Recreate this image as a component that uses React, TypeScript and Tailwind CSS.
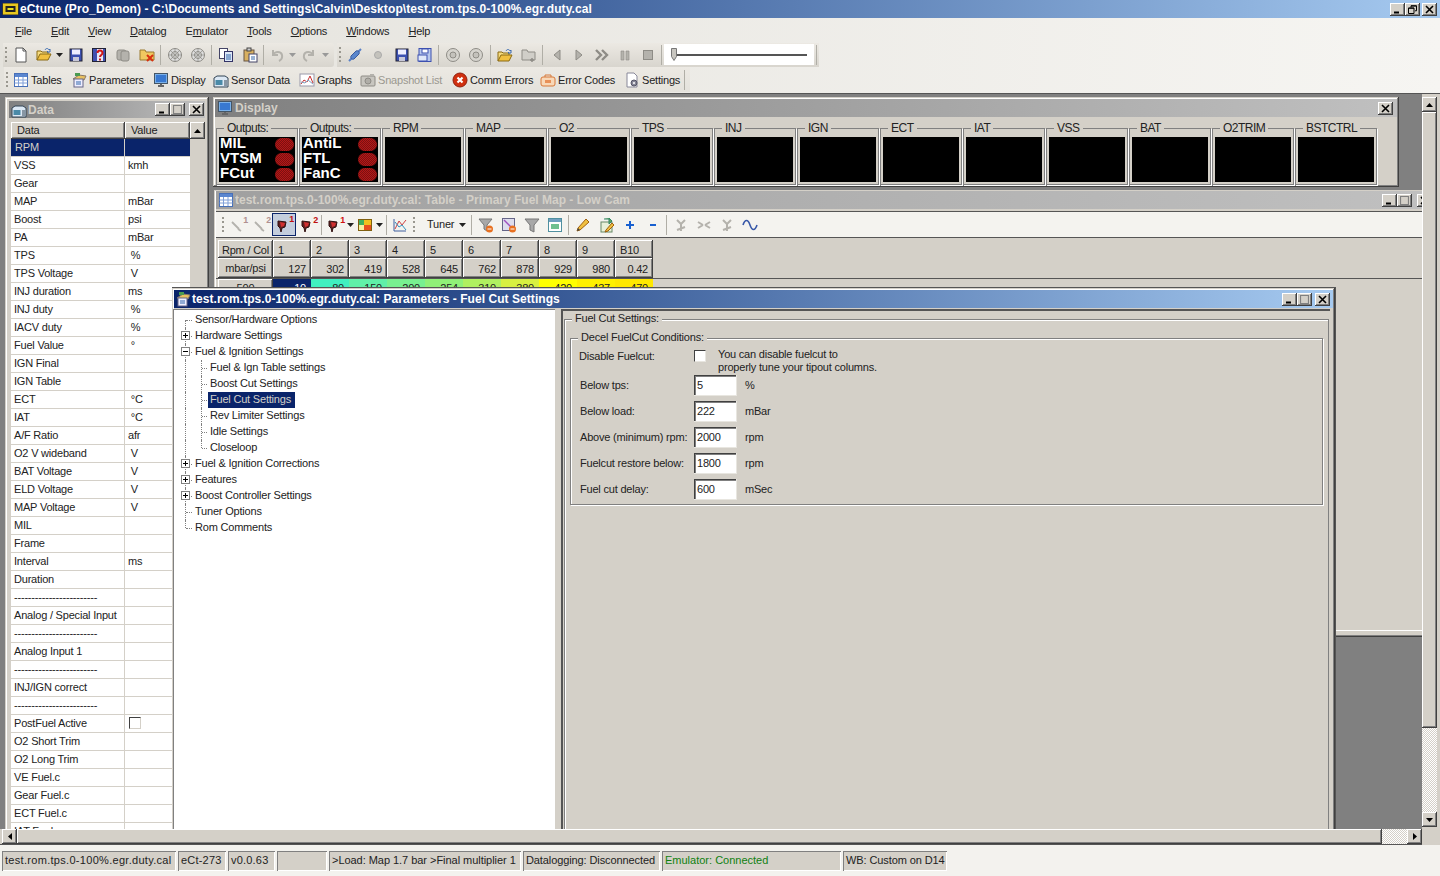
import React from "react";

const OUT = "shadow-[inset_-1px_-1px_0_#404040,inset_1px_1px_0_#ffffff,inset_-2px_-2px_0_#808080]";
const SUNK = "shadow-[inset_1px_1px_0_#808080,inset_-1px_-1px_0_#ffffff]";
const WIN = "shadow-[inset_-1px_-1px_0_#404040,inset_1px_1px_0_#d4d0c8,inset_-2px_-2px_0_#808080,inset_2px_2px_0_#ffffff]";

type P = { n: string };
function Ico({ n }: P) {
  const g = "#b4b2ac";
  const d = "#8e8c86";
  const c: Record<string, React.ReactNode> = {
    doc: <><path d="M3 1h7l3 3v11H3z" fill="#fff" stroke="#555" /><path d="M10 1v3h3" fill="none" stroke="#555" /></>,
    open: <><path d="M1 13V4h4l1 1h6v2" fill="#f6dc80" stroke="#8a6a14" /><path d="M1 13l3-6h11l-3 6z" fill="#f0c040" stroke="#8a6a14" /><path d="M9 3c1-2 3-2 4 0l1-1v3h-3l1-1" fill="none" stroke="#3a6ab0" /></>,
    save: <><rect x="2" y="2" width="12" height="12" fill="#3c50b0" stroke="#223" /><rect x="4" y="2.5" width="8" height="5" fill="#eef" /><rect x="5" y="10" width="6" height="4" fill="#c8c8d8" /></>,
    saveq: <><rect x="1.5" y="1.5" width="13" height="13" fill="#4050b0" stroke="#223" /><rect x="6" y="2" width="6" height="12" fill="#e8e8f4" /><path d="M6.5 6c0-3.5 5-3.5 5 0 0 2-2.5 2-2.5 4M9 11.5v2" fill="none" stroke="#d01818" strokeWidth="2" /></>,
    gdoc: <><rect x="2" y="3" width="9" height="10" rx="2" fill={g} stroke={d} /><rect x="6" y="4" width="8" height="10" rx="2" fill={g} stroke={d} /></>,
    fx: <><path d="M1 13V3h5l1 2h8v8z" fill="#f0c860" stroke="#9a7a30" /><path d="M8 8l6 6M14 8l-6 6" stroke="#d83010" strokeWidth="2" /></>,
    gear: <><circle cx="8" cy="8" r="6.5" fill="#ddd" stroke={d} /><circle cx="8" cy="8" r="3.5" fill="none" stroke={d} /><path d="M8 1v14M1 8h14M3 3l10 10M13 3L3 13" stroke={d} strokeWidth=".7" /></>,
    copy: <><rect x="1.5" y="1.5" width="8" height="10" fill="#fff" stroke="#446" /><rect x="6.5" y="4.5" width="8" height="10" fill="#dde8f8" stroke="#336" /><path d="M8 8h5M8 10h5M8 12h5" stroke="#36a" /></>,
    paste: <><rect x="2" y="3" width="10" height="11" fill="#d8b060" stroke="#654" /><rect x="5" y="1" width="4" height="3" fill="#ccc" stroke="#444" /><rect x="7" y="7" width="8" height="8" fill="#fff" stroke="#446" /><path d="M9 10h4M9 12h4" stroke="#36a" /></>,
    undo: <path d="M4 3v5h5M4 8c2-4 8-4 9 0 .6 3-1 5-3 6" fill="none" stroke={g} strokeWidth="2" />,
    redo: <path d="M12 3v5H7M12 8c-2-4-8-4-9 0-.6 3 1 5 3 6" fill="none" stroke={g} strokeWidth="2" />,
    plug: <><path d="M2 14l3-3M14 2l-3 3" stroke="#5880c8" strokeWidth="2" /><path d="M4 9l5-5c2-1 4 1 3 3l-5 5c-2 1-4-1-3-3z" fill="#5a86cc" stroke="#3a5a9c" /></>,
    dot: <circle cx="8" cy="8" r="3.5" fill="#c4c2bc" stroke="#aaa" />,
    sv2: <><rect x="2" y="1.5" width="12" height="13" fill="#b8c8ec" stroke="#3c50b0" /><rect x="5" y="2" width="6" height="4" fill="#fff" stroke="#3c50b0" /><rect x="1" y="8" width="9" height="6" fill="#e0e8f8" stroke="#3c50b0" /></>,
    disc: <><circle cx="8" cy="8" r="6.5" fill="#d6d4ce" stroke={d} /><circle cx="8" cy="8" r="3" fill="#c4c2bc" stroke={d} /></>,
    fold: <><path d="M1 14V5h4l1 1h6v2" fill="#f6dc80" stroke="#8a6a14" /><path d="M1 14l3-6h11l-3 6z" fill="#f0c040" stroke="#8a6a14" /><path d="M9 4c1-2 3-2 4 0l1-1v3h-3l1-1" fill="none" stroke="#3a6ab0" /></>,
    gfold: <><path d="M1 13V3h5l1 2h7v8z" fill="#d0cec8" stroke={d} /><path d="M11 11v4M9 13h4" stroke={d} strokeWidth="1.5" /></>,
    left: <path d="M11 3v10L5 8z" fill={g} stroke={d} />,
    right: <path d="M5 3v10l6-5z" fill={g} stroke={d} />,
    ff: <path d="M2 3l5 5-5 5M8 3l5 5-5 5" fill="none" stroke={d} strokeWidth="2.4" />,
    pause: <path d="M4 4h3v9H4zM9 4h3v9H9z" fill={g} stroke={d} strokeWidth=".6" />,
    stop: <rect x="3.5" y="3.5" width="9" height="9" fill={g} stroke={d} />,
    tables: <><rect x="1.5" y="1.5" width="13" height="13" fill="#fff" stroke="#4870b8" /><rect x="2" y="2" width="12" height="3" fill="#5a86d0" /><path d="M1.5 8h13M1.5 11h13M5.5 5v9M10 5v9" stroke="#80a0d8" /></>,
    params: <><path d="M2 7l6-4 7 1-2 4z" fill="#e8c060" stroke="#876" /><rect x="3" y="7" width="9" height="8" fill="#eef" stroke="#668" /><path d="M4 1h5v3H4z" fill="#4a9a50" /><path d="M5 10h5M5 12h5" stroke="#36a" /></>,
    display: <><rect x="1.5" y="1.5" width="13" height="10" fill="#7ab0e8" stroke="#456" /><rect x="3" y="3" width="10" height="7" fill="#3878d0" /><path d="M5 14h6M8 12v2" stroke="#666" strokeWidth="2" /></>,
    sensor: <><path d="M1 15V6l3-2h8l3 2v9z" fill="#dce8f4" stroke="#345" /><rect x="2.5" y="8" width="7" height="5" fill="#4a8aa8" /><path d="M11 9h3M11 11h3M11 13h3" stroke="#345" /></>,
    graphs: <><rect x="1" y="2" width="14" height="12" fill="#fff" stroke="#99a" /><path d="M2 12l3-4 3 2 3-6 3 7" fill="none" stroke="#c83030" /><path d="M2 10l4 1 3-3 5 4" fill="none" stroke="#80a0c0" /></>,
    snap: <><rect x="1" y="4" width="14" height="10" rx="1" fill="#c8c6c0" stroke={d} /><circle cx="8" cy="9" r="3" fill="#b0aea8" stroke={d} /><rect x="10" y="2" width="4" height="2" fill={g} /></>,
    comm: <><circle cx="8" cy="8" r="7" fill="#d03010" stroke="#902010" /><path d="M5.5 5.5l5 5M10.5 5.5l-5 5" stroke="#fff" strokeWidth="2.2" /></>,
    err: <><rect x="1" y="5" width="14" height="9" rx="2" fill="#f8d8b8" stroke="#d87838" /><path d="M5 5V3h6v2" fill="none" stroke="#d87838" /><rect x="5" y="8" width="6" height="3" fill="#e89058" /></>,
    set: <><path d="M3 1h7l3 3v11H3z" fill="#fff" stroke="#889" /><circle cx="10" cy="11" r="3" fill="#889" stroke="#556" /><circle cx="10" cy="11" r="1" fill="#fff" /></>,
    w1: <path d="M2 5l7 7M8 12l3 2" stroke={g} strokeWidth="1.8" />,
    inj: <><path d="M2 4l8 1-1 5-3 1-1 4-1-4-2-2z" fill="#602020" stroke="#301010" /><path d="M4 5l5 1-1 3-3 1z" fill="#d03030" /></>,
    fm: <><rect x="1.5" y="2.5" width="13" height="11" fill="#f8f0a0" stroke="#806010" /><rect x="2" y="3" width="5" height="5" fill="#40b060" /><rect x="7" y="8" width="7" height="5" fill="#e85020" /><rect x="7" y="3" width="7" height="5" fill="#f0c020" /></>,
    chart: <><path d="M2 2v12h12" fill="none" stroke="#4060a0" /><path d="M3 12l4-8 3 4 4-5" fill="none" stroke="#d04040" /><path d="M3 5l4 5 3-2 4 5" fill="none" stroke="#3090c0" /></>,
    f1: <><path d="M1 2h13l-5 6v6l-3-2V8z" fill="#a8a8a8" stroke="#777" /><circle cx="11.5" cy="12" r="3.5" fill="#e87020" /><path d="M9.5 12h4" stroke="#fff" /></>,
    f2: <><rect x="1.5" y="1.5" width="12" height="12" fill="#dde" stroke="#668" /><path d="M3 3l8 8" stroke="#a050c0" strokeWidth="1.5" /><circle cx="11.5" cy="12" r="3.5" fill="#e87020" /><path d="M9.5 12h4" stroke="#fff" /></>,
    f3: <path d="M1 2h14l-5 6v7l-4-2V8z" fill="#a8a8a8" stroke="#777" />,
    f4: <><rect x="1.5" y="1.5" width="13" height="13" fill="#fff" stroke="#5090a0" /><rect x="2" y="2" width="12" height="3" fill="#70a0c0" /><rect x="4" y="7" width="8" height="5" fill="#70c090" /></>,
    pen: <><path d="M3 11L11 2l3 3-9 8-3 1z" fill="#f0c040" stroke="#a06010" /><path d="M2 14l1-3 2 2z" fill="#444" /></>,
    pen2: <><rect x="2" y="5" width="11" height="10" fill="#e8f0d8" stroke="#686" /><path d="M5 2h5v5l3-3-3-3" fill="#60a060" stroke="#386" /><path d="M7 13l6-7 2 2-6 6-3 1z" fill="#f0c040" stroke="#a06010" /></>,
    plus: <path d="M8 4v8M4 8h8" stroke="#1860d0" strokeWidth="2" />,
    minus: <path d="M5 8h6" stroke="#1860d0" strokeWidth="2" />,
    spark: <path d="M4 3l4 4M12 3L8 7M8 7v7M4 13l8-3" stroke={g} strokeWidth="2" fill="none" />,
    spark2: <path d="M2 5l5 3M14 5L9 8M2 11l5-3M14 11L9 8" stroke={g} strokeWidth="2" fill="none" />,
    wave: <path d="M1 8c2-6 5-6 7 0s5 6 7 0" fill="none" stroke="#3858a8" strokeWidth="1.6" />,
  };
  return <svg viewBox="0 0 16 16" className="w-4 h-4 shrink-0">{c[n]}</svg>;
}

function Cap({ k }: { k: string }) {
  return (
    <div className={`w-[15px] h-[13px] bg-[#d4d0c8] ${OUT} flex items-center justify-center shrink-0`}>
      <svg viewBox="0 0 9 9" className="w-[9px] h-[9px]">
        {k === "min" && <path d="M1 7.5h5" stroke="#000" strokeWidth="2" />}
        {k === "maxg" && <path d="M.5 .5h8v8h-8z" fill="none" stroke="#808080" strokeWidth="1.2" />}
        {k === "res" && <path d="M3 2.5V.8h5.5v5H7M.5 3h5.5v5.5H.5zM.5 3.2h5.5M3 1h5.5" fill="none" stroke="#000" strokeWidth="1" />}
        {k === "x" && <path d="M1 1l7 7M8 1L1 8" stroke="#000" strokeWidth="1.6" />}
      </svg>
    </div>
  );
}

function Sep() {
  return <div className="w-[5px] h-[20px] flex justify-center shrink-0"><div className="w-px bg-[#b0aea6]" /></div>;
}
function Grip() {
  return <div className="w-[6px] h-[18px] shrink-0 flex flex-col justify-between items-center py-[1px]">{[0, 1, 2, 3].map((i) => <div key={i} className="w-[2px] h-[2px] bg-[#9a9890]" />)}</div>;
}
function B({ n, w, s, c }: { n: string; w: string; s?: string; c?: string }) {
  return (
    <div className={`${w} h-[22px] relative flex items-center justify-center shrink-0`}>
      <Ico n={n} />
      {s && <span className={`absolute right-[1px] top-[2px] text-[9px] leading-[9px] font-bold ${c}`}>{s}</span>}
    </div>
  );
}
function Arr({ w, c = "#222" }: { w: string; c?: string }) {
  return <div className={`${w} flex items-center justify-center shrink-0`}><svg viewBox="0 0 7 4" className="w-[7px] h-1"><path d="M0 0h7L3.5 4z" fill={c} /></svg></div>;
}

const menus: [string, string, string][] = [
  ["", "F", "ile"], ["", "E", "dit"], ["", "V", "iew"], ["", "D", "atalog"], ["E", "m", "ulator"],
  ["", "T", "ools"], ["", "O", "ptions"], ["", "W", "indows"], ["", "H", "elp"],
];

const tb2: [string, string, string, string][] = [
  ["tables", "Tables", "w-[58px]", "text-[#222]"],
  ["params", "Parameters", "w-[82px]", "text-[#222]"],
  ["display", "Display", "w-[60px]", "text-[#222]"],
  ["sensor", "Sensor Data", "w-[86px]", "text-[#222]"],
  ["graphs", "Graphs", "w-[61px]", "text-[#222]"],
  ["snap", "Snapshot List", "w-[92px]", "text-[#9a9890]"],
  ["comm", "Comm Errors", "w-[88px]", "text-[#222]"],
  ["err", "Error Codes", "w-[84px]", "text-[#222]"],
  ["set", "Settings", "w-[60px]", "text-[#222]"],
];

const dataRows: [string, string][] = [
  ["VSS", "kmh"], ["Gear", ""], ["MAP", "mBar"], ["Boost", "psi"], ["PA", "mBar"], ["TPS", " %"], ["TPS Voltage", " V"],
  ["INJ duration", "ms"], ["INJ duty", " %"], ["IACV duty", " %"], ["Fuel Value", " °"], ["IGN Final", ""], ["IGN Table", ""],
  ["ECT", " °C"], ["IAT", " °C"], ["A/F Ratio", "afr"], ["O2 V wideband", " V"], ["BAT Voltage", " V"], ["ELD Voltage", " V"],
  ["MAP Voltage", " V"], ["MIL", ""], ["Frame", ""], ["Interval", "ms"], ["Duration", ""], ["------------------------", ""],
  ["Analog / Special Input", ""], ["------------------------", ""], ["Analog Input 1", ""], ["------------------------", ""],
  ["INJ/IGN correct", ""], ["------------------------", ""], ["PostFuel Active", "#"], ["O2 Short Trim", ""], ["O2 Long Trim", ""],
  ["VE Fuel.c", ""], ["Gear Fuel.c", ""], ["ECT Fuel.c", ""], ["IAT Fuel.c", ""],
];

function DataWin() {
  return (
    <section className={`absolute left-[5px] top-[3px] w-[204px] h-[760px] bg-[#d4d0c8] ${WIN} p-[4px]`}>
      <div className="h-[17px] bg-gradient-to-r from-[#808080] to-[#c0c0c0] flex items-center pl-[2px] pr-[1px]">
        <Ico n="sensor" />
        <span className="flex-1 ml-[1px] font-bold text-[12px] tracking-normal text-[#d4d0c8]">Data</span>
        <Cap k="min" /><Cap k="maxg" /><div className="w-[4px]" /><Cap k="x" />
      </div>
      <div className="mt-[4px] ml-[2px] flex">
        <div className="w-[179px]">
          <div className="flex h-[17px] bg-[#d4d0c8]">
            <div className={`w-[114px] ${OUT} pl-[6px] leading-[17px]`}>Data</div>
            <div className={`flex-1 ${OUT} pl-[6px] leading-[17px]`}>Value</div>
          </div>
          <div className="bg-white">
            <div className="flex h-[18px] bg-[#0a246a] text-[#d4d0c8] leading-[17px] border-b border-[#d4d0c8]">
              <div className="w-[114px] pl-[4px] border-r border-[#d4d0c8]">RPM</div><div className="flex-1" />
            </div>
            {dataRows.map(([a, u], i) => (
              <div key={i} className="flex h-[18px] leading-[17px] border-b border-[#d4d0c8]">
                <div className="w-[114px] pl-[3px] border-r border-[#d4d0c8] whitespace-pre overflow-hidden">{a}</div>
                <div className="flex-1 pl-[3px] whitespace-pre">
                  {u === "#" ? <div className="w-[12px] h-[12px] mt-[2px] ml-[1px] bg-white border border-[#404040] border-r-[#d4d0c8] border-b-[#d4d0c8]" /> : u}
                </div>
              </div>
            ))}
          </div>
        </div>
        <div className="w-[15px] bg-[#d4d0c8]">
          <div className={`h-[17px] ${OUT} flex items-center justify-center`}><svg viewBox="0 0 7 4" className="w-[7px] h-1"><path d="M0 4h7L3.5 0z" /></svg></div>
        </div>
      </div>
    </section>
  );
}

const gauges = ["RPM", "MAP", "O2", "TPS", "INJ", "IGN", "ECT", "IAT", "VSS", "BAT", "O2TRIM", "BSTCTRL"];

function Led() {
  return <div className="w-[19px] h-[13px] rounded-full bg-[repeating-conic-gradient(#b41818_0_25%,#7c1010_0_50%)] bg-[length:2px_2px]" />;
}
function Group({ label, children }: { label: string; children?: React.ReactNode }) {
  return (
    <fieldset className="w-[82px] h-[64px] border border-[#808080] shadow-[1px_1px_0_#ffffff] pt-0 px-[2px] pb-[2px] min-w-0">
      <legend className="ml-[5px] px-[3px] h-[14px] leading-[15px] bg-[#d4d0c8] text-[12px] tracking-[-0.5px]">{label}</legend>
      <div className="h-[45px] bg-black mt-[2px] pl-[1px] flex flex-col justify-center">{children}</div>
    </fieldset>
  );
}
function OutLine({ t }: { t: string }) {
  return (
    <div className="flex items-center justify-between h-[15px] pr-[1px] text-white text-[15px] tracking-normal font-bold leading-[15px]">
      <span className="relative -top-[2px]">{t}</span><Led />
    </div>
  );
}
function DisplayWin() {
  return (
    <section className={`absolute left-[213px] top-[3px] w-[1186px] h-[90px] bg-[#d4d0c8] ${WIN} p-[2px]`}>
      <div className="h-[18px] bg-gradient-to-r from-[#808080] to-[#c0c0c0] flex items-center pl-[2px] pr-[4px]">
        <Ico n="display" />
        <span className="flex-1 ml-[2px] font-bold text-[12px] tracking-normal text-[#d4d0c8]">Display</span>
        <Cap k="x" />
      </div>
      <div className="flex gap-px pl-px mt-[4px]">
        <Group label="Outputs:"><OutLine t="MIL" /><OutLine t="VTSM" /><OutLine t="FCut" /></Group>
        <Group label="Outputs:"><OutLine t="AntiL" /><OutLine t="FTL" /><OutLine t="FanC" /></Group>
        {gauges.map((g) => <Group key={g} label={g} />)}
      </div>
    </section>
  );
}

const cols = ["1", "2", "3", "4", "5", "6", "7", "8", "9", "B10"];
const colv = ["127", "302", "419", "528", "645", "762", "878", "929", "980", "0.42"];
const r1: [string, string][] = [
  ["10", "bg-[#0a246a] text-white"], ["80", "bg-[#40f0c0]"], ["150", "bg-[#60f0a8]"], ["200", "bg-[#78f090]"], ["254", "bg-[#90f078]"],
  ["310", "bg-[#b0f060]"], ["380", "bg-[#d8f040]"], ["420", "bg-[#ffff00]"], ["437", "bg-[#fff000]"], ["470", "bg-[#ffe800]"],
];

function TableWin() {
  return (
    <section className={`absolute left-[214px] top-[96px] w-[1222px] h-[447px] bg-[#d4d0c8] ${WIN} px-[2px] pt-px`}>
      <div className="h-[18px] bg-gradient-to-r from-[#a0a0a0] to-[#c0c0c0] flex items-center pl-[2px] pr-[2px]">
        <Ico n="tables" />
        <span className="flex-1 ml-[1px] font-bold text-[12px] tracking-normal text-[#d4d0c8]">test.rom.tps.0-100%.egr.duty.cal: Table - Primary Fuel Map - Low Cam</span>
        <Cap k="min" /><Cap k="maxg" /><div className="w-[5px]" /><Cap k="x" />
      </div>
      <div className="mt-[2px] h-[27px] bg-[#f4f3ef] border-t border-b border-[#555] flex items-center pl-[4px]">
        <Grip />
        <B n="w1" w="w-[23px]" s="1" c="text-[#b09090]" />
        <B n="w1" w="w-[23px]" s="2" c="text-[#b09090]" />
        <div className="w-[24px] h-[23px] relative bg-[#c4cedd] border border-[#0a246a] flex items-center justify-center">
          <Ico n="inj" /><span className="absolute right-[1px] top-[1px] text-[9px] leading-[9px] font-bold text-[#c01010]">1</span>
        </div>
        <B n="inj" w="w-[23px]" s="2" c="text-[#c01010]" />
        <Sep />
        <B n="inj" w="w-[22px]" s="1" c="text-[#d01010]" /><Arr w="w-[9px]" />
        <B n="fm" w="w-[19px]" /><Arr w="w-[10px]" />
        <Sep />
        <B n="chart" w="w-[22px]" />
        <Grip />
        <span className="ml-[10px] w-[29px]">Tuner</span><Arr w="w-[13px]" />
        <Sep />
        <B n="f1" w="w-[23px]" /><B n="f2" w="w-[23px]" /><B n="f3" w="w-[23px]" /><B n="f4" w="w-[23px]" />
        <Sep />
        <B n="pen" w="w-[24px]" /><B n="pen2" w="w-[23px]" /><B n="plus" w="w-[23px]" /><B n="minus" w="w-[23px]" />
        <Sep />
        <B n="spark" w="w-[23px]" /><B n="spark2" w="w-[23px]" /><B n="spark" w="w-[23px]" /><B n="wave" w="w-[23px]" />
      </div>
      <div className="pl-[2px] pt-[2px] text-[#222]">
        <div className="flex h-[18px]">
          <div className={`w-[55px] ${OUT} text-center leading-[20px]`}>Rpm / Col</div>
          {cols.map((c) => <div key={c} className={`w-[38px] ${OUT} pl-[5px] leading-[20px]`}>{c}</div>)}
        </div>
        <div className="flex h-[20px]">
          <div className={`w-[55px] ${OUT} text-center leading-[21px]`}>mbar/psi</div>
          {colv.map((c) => <div key={c} className={`w-[38px] ${OUT} pr-[5px] text-right leading-[23px]`}>{c}</div>)}
        </div>
      </div>
      <div className="h-px bg-[#555]" />
      <div className="pl-[2px] flex h-[20px]">
        <div className={`w-[55px] ${OUT} text-center leading-[18px]`}>500</div>
        {r1.map(([v, c]) => <div key={v} className={`w-[38px] ${c} text-right pr-[5px] leading-[18px]`}>{v}</div>)}
      </div>
      <div className="absolute left-[2px] right-[2px] bottom-[2px] h-[5px] border-t border-white" />
    </section>
  );
}

const tree: [number, string, string][] = [
  [1, "Sensor/Hardware Options", ""], [1, "Hardware Settings", "+"], [1, "Fuel & Ignition Settings", "-"],
  [2, "Fuel & Ign Table settings", ""], [2, "Boost Cut Settings", ""], [2, "Fuel Cut Settings", "s"], [2, "Rev Limiter Settings", ""],
  [2, "Idle Settings", ""], [2, "Closeloop", "l"], [1, "Fuel & Ignition Corrections", "+"], [1, "Features", "+"],
  [1, "Boost Controller Settings", "+"], [1, "Tuner Options", ""], [1, "Rom Comments", "e"],
];
const DOT = "border-dotted border-[#808080]";

function TreeRow({ lvl, t, f, i }: { lvl: number; t: string; f: string; i: number }) {
  return (
    <div className={`relative h-[16px] leading-[15px] whitespace-nowrap ${lvl === 1 ? "pl-[21px]" : "pl-[36px]"}`}>
      <span className={`absolute left-[11px] border-l ${DOT} ${i === 0 ? "top-[8px] bottom-0" : f === "e" ? "top-0 h-[8px]" : "top-0 bottom-0"}`} />
      {lvl === 2 && <span className={`absolute left-[27px] border-l ${DOT} top-0 ${f === "l" ? "h-[8px]" : "bottom-0"}`} />}
      <span className={`absolute top-[8px] border-t ${DOT} ${lvl === 1 ? "left-[12px] w-[6px]" : "left-[28px] w-[5px]"}`} />
      {(f === "+" || f === "-") && (
        <span className="absolute left-[7px] top-[3px] w-[9px] h-[9px] bg-white border border-[#808080] flex items-center justify-center">
          <svg viewBox="0 0 7 7" className="w-[7px] h-[7px]"><path d={f === "+" ? "M1 3.5h5M3.5 1v5" : "M1 3.5h5"} stroke="#000" /></svg>
        </span>
      )}
      <span className={f === "s" ? "inline-block -ml-[2px] px-[2px] w-[87px] h-[16px] bg-[#0a246a] text-[#d4d0c8]" : ""}>{t}</span>
    </div>
  );
}

function FormRow({ label, v, u }: { label: string; v: string; u: string }) {
  return (
    <div className="flex items-center h-[26px]">
      <span className="w-[123px] pl-[9px] whitespace-nowrap">{label}</span>
      <div className="w-[43px] h-[21px] bg-white shadow-[inset_1px_1px_0_#404040,inset_2px_2px_0_#808080,inset_-1px_-1px_0_#ffffff] pl-[3px] leading-[20px] border-b border-r border-[#e8e6e0]">{v}</div>
      <span className="ml-[8px]">{u}</span>
    </div>
  );
}

function ParamsWin() {
  return (
    <section className={`absolute left-[172px] top-[193px] w-[1164px] h-[600px] bg-[#d4d0c8] ${WIN} px-[2px] pt-[2px] border-t border-r border-[#555]`}>
      <div className="h-[18px] bg-gradient-to-r from-[#0a246a] to-[#a6caf0] flex items-center pl-[1px] pr-[3px]">
        <Ico n="params" />
        <span className="flex-1 ml-[1px] font-bold text-[12px] tracking-[0.05px] text-white">test.rom.tps.0-100%.egr.duty.cal: Parameters - Fuel Cut Settings</span>
        <Cap k="min" /><Cap k="maxg" /><div className="w-[3px]" /><Cap k="x" />
      </div>
      <div className="flex mt-px">
        <div className="w-[382px] h-[560px] bg-white border-t border-l border-[#808080] pt-[2px] -ml-px">
          {tree.map(([l, t, f], i) => <TreeRow key={t} lvl={l} t={t} f={f} i={i} />)}
        </div>
        <div className="w-[6px]" />
        <div className="flex-1 border-t-2 border-l-2 border-[#555] mr-[3px] pl-[1px] pr-px pt-[1px]">
          <fieldset className="h-[560px] border border-[#808080] shadow-[inset_1px_1px_0_#ffffff] px-[5px] min-w-0">
            <legend className="ml-[2px] px-[3px] h-[14px] leading-[13px] bg-[#d4d0c8]">Fuel Cut Settings:</legend>
            <fieldset className="mt-[5px] h-[174px] border border-[#808080] shadow-[1px_1px_0_#ffffff,inset_1px_1px_0_#ffffff] min-w-0">
              <legend className="ml-[7px] px-[3px] h-[14px] leading-[13px] bg-[#d4d0c8]">Decel FuelCut Conditions:</legend>
              <div className="flex h-[27px] pt-[4px]">
                <span className="w-[123px] pl-[8px] leading-[14px]">Disable Fuelcut:</span>
                <div className="w-[12px] h-[12px] mt-px bg-white border border-[#404040] border-r-[#e8e6e0] border-b-[#e8e6e0]" />
                <p className="ml-[12px] leading-[13px] -mt-[1px]">You can disable fuelcut to<br />properly tune your tipout columns.</p>
              </div>
              <FormRow label="Below tps:" v="5" u="%" />
              <FormRow label="Below load:" v="222" u="mBar" />
              <FormRow label="Above (minimum) rpm:" v="2000" u="rpm" />
              <FormRow label="Fuelcut restore below:" v="1800" u="rpm" />
              <FormRow label="Fuel cut delay:" v="600" u="mSec" />
            </fieldset>
          </fieldset>
        </div>
      </div>
    </section>
  );
}

const status: [string, string, string][] = [
  ["test.rom.tps.0-100%.egr.duty.cal", "w-[174px]", "tracking-[0.3px]"], ["eCt-273", "w-[48px]", "tracking-[0.2px]"], ["v0.0.63", "w-[47px]", "tracking-[0.2px]"], ["", "w-[50px]", ""],
  [">Load: Map 1.7 bar >Final multiplier 1", "w-[192px]", "tracking-[-0.04px]"], ["Datalogging: Disconnected", "w-[137px]", "tracking-[-0.1px]"],
  ["Emulator: Connected", "w-[179px]", "text-[#108010] tracking-[0px]"], ["WB: Custom on D14", "w-[104px]", "tracking-[-0.1px]"],
];

export default function App() {
  return (
    <div className="w-[1440px] h-[876px] overflow-hidden flex flex-col bg-[#f3f2ee] text-[#222] text-[11px] tracking-[-0.2px] font-['Liberation_Sans',Arial,sans-serif]">
      <header className="h-[18px] bg-gradient-to-r from-[#0a246a] to-[#a6caf0] flex items-center pr-[3px] shrink-0">
        <svg viewBox="0 0 16 12" className="w-[17px] h-[12px] ml-[2px] shrink-0"><rect width="16" height="12" fill="#e8c820" stroke="#333" /><rect x="3" y="3" width="10" height="6" fill="#222" /><path d="M5 5h6v2H5z" fill="#e8e020" /></svg>
        <span className="flex-1 ml-px font-bold text-[12px] tracking-[0.1px] text-white whitespace-nowrap">eCtune (Pro_Demon) - C:\Documents and Settings\Calvin\Desktop\test.rom.tps.0-100%.egr.duty.cal</span>
        <Cap k="min" /><Cap k="res" /><div className="w-[2px]" /><Cap k="x" />
      </header>

      <div className="h-[76px] shrink-0 bg-gradient-to-r from-[#e4e2dc] to-[#f6f5f2] border-b border-[#555]">
        <nav className="h-[24px] flex items-center gap-[19px] pl-[15px] pt-[2px]">
          {menus.map(([a, b, c]) => <span key={b + c}>{a}<span className="underline">{b}</span>{c}</span>)}
        </nav>
        <div className="flex h-[25px] items-center">
          <div className="ml-[3px] w-[331px] h-[24px] bg-gradient-to-b from-[#ece9e3] to-[#d8d5ce] rounded-r-[3px] flex items-center">
            <Grip />
            <B n="doc" w="w-[23px]" /><B n="open" w="w-[23px]" /><Arr w="w-[9px]" /><B n="save" w="w-[23px]" /><B n="saveq" w="w-[24px]" /><B n="gdoc" w="w-[24px]" /><B n="fx" w="w-[23px]" />
            <Sep /><B n="gear" w="w-[23px]" /><B n="gear" w="w-[23px]" />
            <Sep /><B n="copy" w="w-[24px]" /><B n="paste" w="w-[23px]" />
            <Sep /><B n="undo" w="w-[21px]" /><Arr w="w-[11px]" c="#999" /><B n="redo" w="w-[21px]" /><Arr w="w-[12px]" c="#999" />
          </div>
          <div className="ml-[3px] w-[482px] h-[24px] bg-gradient-to-b from-[#ece9e3] to-[#d8d5ce] flex items-center">
            <Grip />
            <B n="plug" w="w-[23px]" /><B n="dot" w="w-[24px]" /><B n="save" w="w-[23px]" /><B n="sv2" w="w-[23px]" />
            <Sep /><B n="disc" w="w-[23px]" /><B n="disc" w="w-[24px]" />
            <Sep /><B n="fold" w="w-[24px]" /><B n="gfold" w="w-[23px]" />
            <Sep /><B n="left" w="w-[23px]" /><B n="right" w="w-[22px]" /><B n="ff" w="w-[23px]" /><B n="pause" w="w-[23px]" /><B n="stop" w="w-[23px]" />
            <Sep />
            <div className="w-[150px] h-[21px] bg-white flex items-center pl-[7px] pr-[7px]">
              <svg viewBox="0 0 6 13" className="w-[6px] h-[13px] shrink-0"><path d="M.5.5h5v8L3 12.5.5 8.5z" fill="#c8c6c0" stroke="#777" /></svg>
              <div className="flex-1 h-[2px] bg-[#555]" />
            </div>
            <div className="ml-[2px] w-px h-[20px] bg-[#b0aea6]" />
          </div>
        </div>
        <div className="flex items-center h-[25px]">
          <div className="ml-[4px] w-[686px] h-[25px] bg-gradient-to-b from-[#ece9e3] to-[#e4e2dc] flex items-center">
            <Grip /><div className="w-[3px]" />
            {tb2.map(([n, t, w, c]) => (
              <div key={t} className={`${w} shrink-0 flex items-center gap-[2px] ${c}`}><Ico n={n} /><span className="whitespace-nowrap pt-px">{t}</span></div>
            ))}
            <div className="w-px h-[20px] bg-[#b0aea6]" />
          </div>
        </div>
      </div>

      <div className="h-[751px] shrink-0 flex bg-[#d4d0c8]">
        <div className="w-[1422px] flex flex-col">
          <main className="h-[735px] relative overflow-hidden bg-[#808080]">
            <DataWin />
            <DisplayWin />
            <TableWin />
            <ParamsWin />
          </main>
          <div className="h-[16px] flex bg-[#d4d0c8] border-b border-[#555] pl-[2px]">
            <div className={`w-[15px] h-[15px] ${OUT} flex items-center justify-center`}><svg viewBox="0 0 4 7" className="w-1 h-[7px]"><path d="M4 0v7L0 3.5z" /></svg></div>
            <div className={`w-[1365px] h-[15px] ${OUT}`} />
            <div className="flex-1 h-[15px] bg-[repeating-conic-gradient(#d4d0c8_0_25%,#ffffff_0_50%)] bg-[length:2px_2px]" />
            <div className={`w-[15px] h-[15px] ${OUT} flex items-center justify-center`}><svg viewBox="0 0 4 7" className="w-1 h-[7px]"><path d="M0 0v7l4-3.5z" /></svg></div>
          </div>
        </div>
        <div className="w-[18px] pt-[3px] flex flex-col">
          <div className={`w-[15px] h-[15px] shrink-0 ${OUT} flex items-center justify-center`}><svg viewBox="0 0 7 4" className="w-[7px] h-1"><path d="M0 4h7L3.5 0z" /></svg></div>
          <div className={`w-[15px] h-[616px] shrink-0 ${OUT}`} />
          <div className="w-[15px] h-[84px] shrink-0 bg-[repeating-conic-gradient(#d4d0c8_0_25%,#ffffff_0_50%)] bg-[length:2px_2px]" />
          <div className={`w-[15px] h-[15px] shrink-0 ${OUT} flex items-center justify-center`}><svg viewBox="0 0 7 4" className="w-[7px] h-1"><path d="M0 0h7L3.5 4z" /></svg></div>
        </div>
      </div>

      <footer className="flex-1 pt-[6px] pl-[2px] flex gap-[2px] items-start">
        {status.map(([t, w, c], i) => (
          <div key={i} className={`${w} h-[20px] shrink-0 bg-[#d4d0c8] ${SUNK} pl-[3px] leading-[19px] whitespace-nowrap overflow-hidden ${c}`}>{t}</div>
        ))}
      </footer>
    </div>
  );
}
